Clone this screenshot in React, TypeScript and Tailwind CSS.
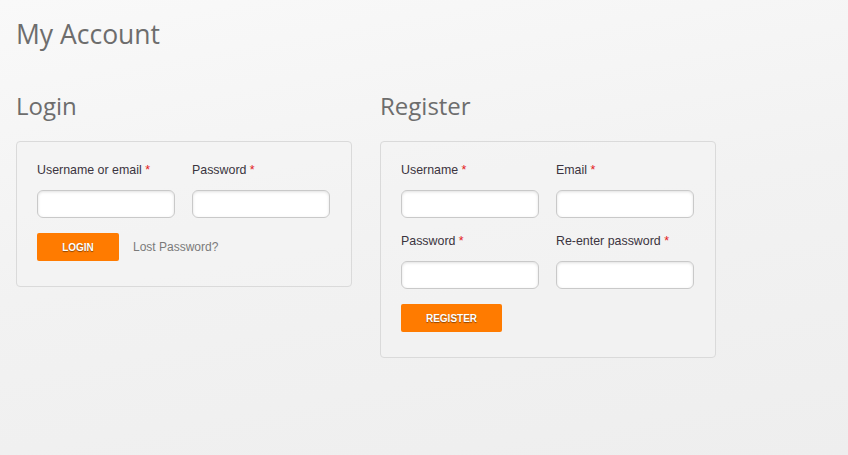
import type { ReactNode } from "react";

const heading = { fontFamily: '"Open Sans", "Noto Sans", sans-serif' };
const body = { fontFamily: '"Liberation Sans", Arial, sans-serif' };

function Field({ label }: { label: string }) {
  return (
    <label className="flex flex-col">
      <span className="h-4 text-[12.4px] leading-4 text-[#3b3440]">
        {label} <span className="text-[#e3201b]">*</span>
      </span>
      <input
        className="mt-3 h-7 w-[138px] rounded-[6px] border border-[#c9c9c9] bg-white px-2 text-[12px] shadow-[inset_0_1px_3px_rgba(0,0,0,0.12)] outline-none"
        type="text"
      />
    </label>
  );
}

function OrangeButton({ children, width }: { children: ReactNode; width: string }) {
  return (
    <button
      className={`${width} h-7 rounded-[2px] bg-[#ff7b00] text-[10px] font-bold uppercase text-white [text-shadow:0_1px_1px_rgba(0,0,0,0.45)]`}
      type="button"
    >
      {children}
    </button>
  );
}

function Panel({ title, children }: { title: string; children: ReactNode }) {
  return (
    <section className="w-[336px]">
      <h2 className="text-[24px] leading-8 text-[#6d6d6d]" style={heading}>
        {title}
      </h2>
      <div className="mt-[19px] rounded-[4px] border border-[#dadada] bg-[#f3f3f3]/60 px-5 pb-[25px] pt-[20px]">
        {children}
      </div>
    </section>
  );
}

export default function App() {
  return (
    <div
      className="min-h-[455px] w-full bg-[linear-gradient(170deg,#f9f9f9_0%,#f2f2f2_50%,#eeeeee_100%)] px-4 pt-[14px]"
      style={body}
    >
      <h1 className="text-[26.5px] leading-10 text-[#6d6d6d]" style={heading}>
        My Account
      </h1>
      <div className="mt-[36px] flex gap-[28px]">
        <Panel title="Login">
          <div className="flex gap-[17px]">
            <Field label="Username or email" />
            <Field label="Password" />
          </div>
          <div className="mt-[15px] flex items-center gap-[14px]">
            <OrangeButton width="w-[82px]">Login</OrangeButton>
            <a className="text-[12px] text-[#7a7a7a]" href="#">
              Lost Password?
            </a>
          </div>
        </Panel>
        <Panel title="Register">
          <div className="grid grid-cols-[138px_138px] gap-x-[17px] gap-y-[15px]">
            <Field label="Username" />
            <Field label="Email" />
            <Field label="Password" />
            <Field label="Re-enter password" />
          </div>
          <div className="mt-[15px]">
            <OrangeButton width="w-[101px]">Register</OrangeButton>
          </div>
        </Panel>
      </div>
    </div>
  );
}
